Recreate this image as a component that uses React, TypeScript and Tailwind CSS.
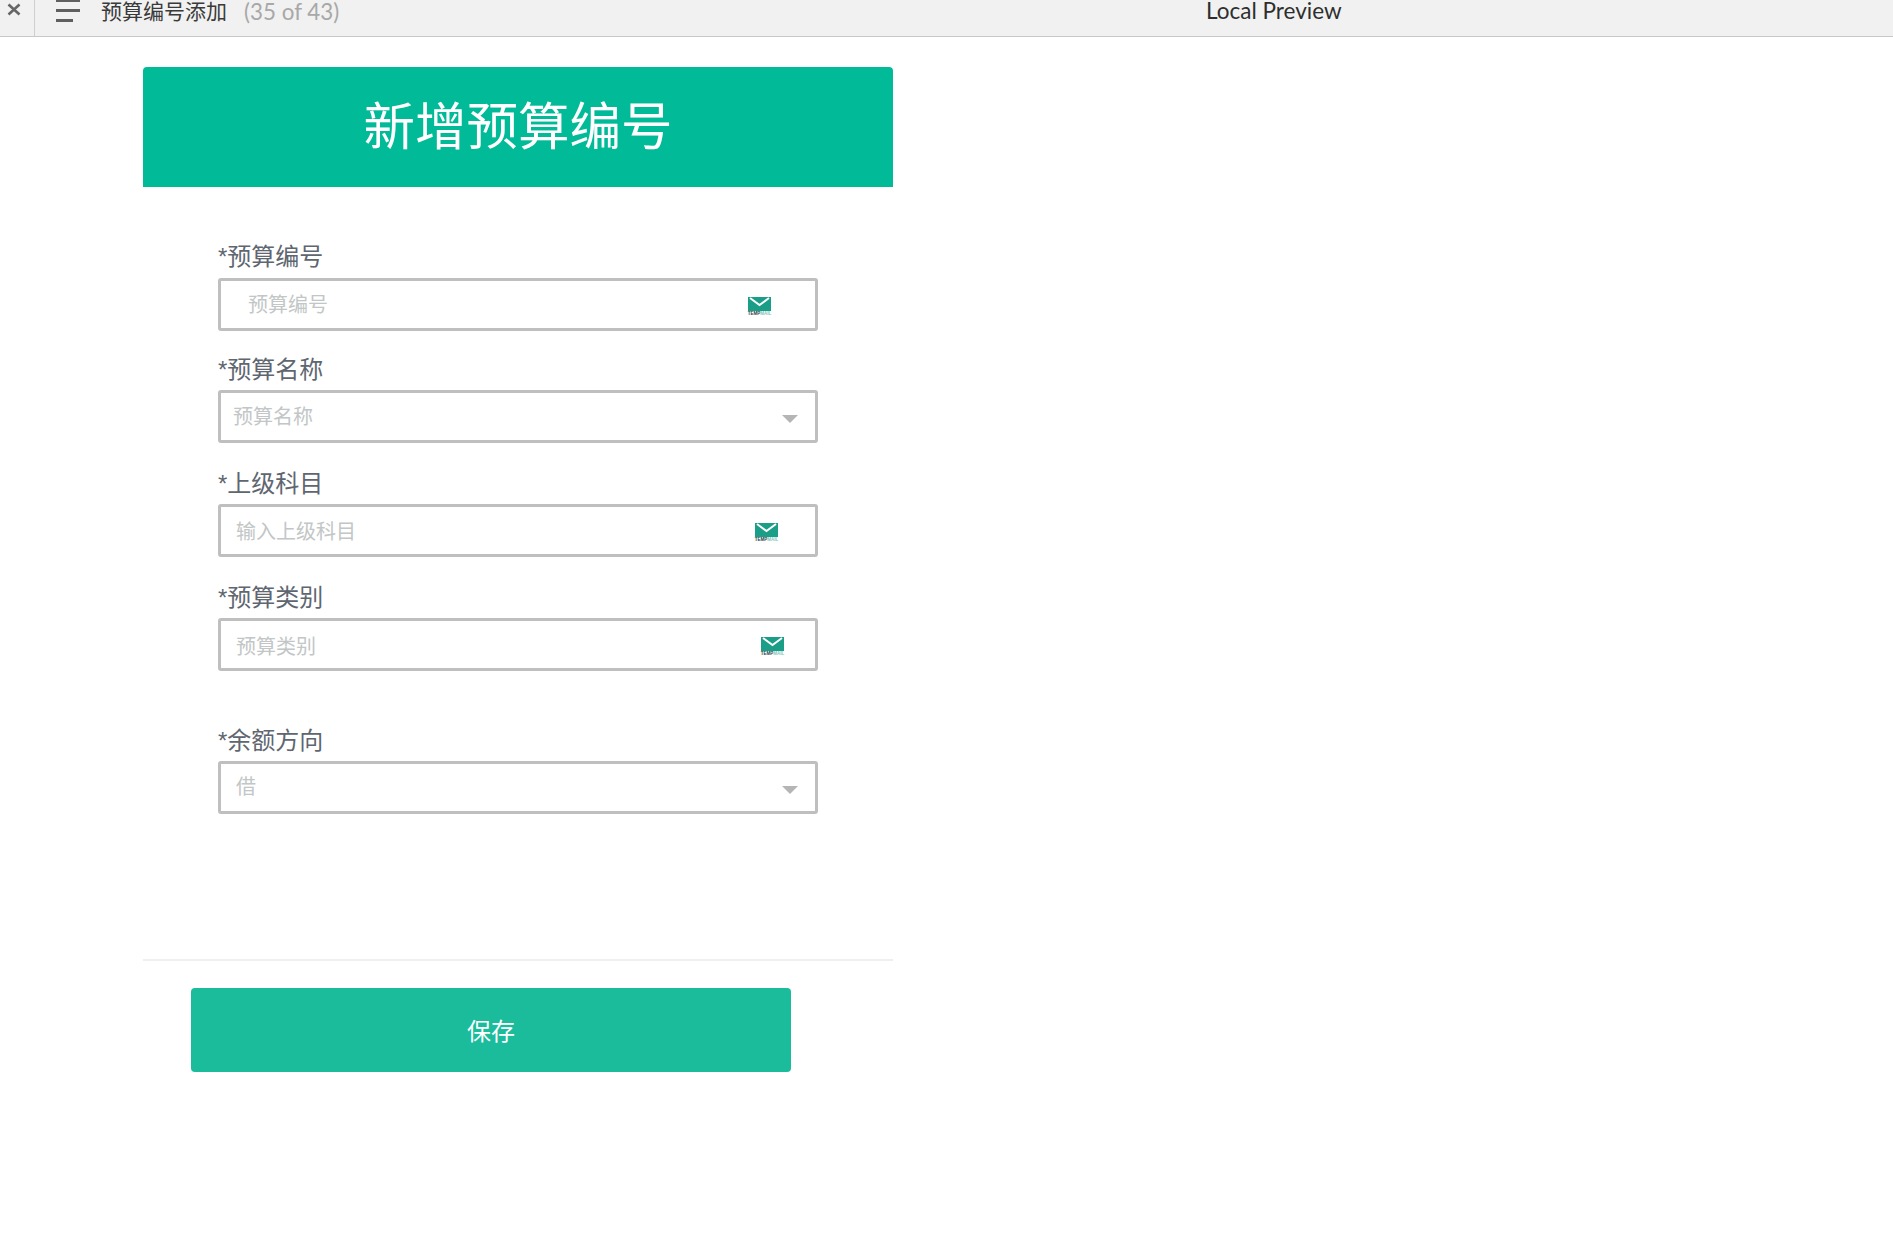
const font = "font-['Liberation_Sans','Noto_Sans_CJK_SC',sans-serif]";

function Mail() {
  return (
    <div className="flex flex-col items-center w-[23px] mt-[3px]">
      <svg width="23" height="14" viewBox="0 0 23 14">
        <rect width="23" height="14" fill="#1b9e87" />
        <path d="M2 1 L11.5 8 L21 1" fill="none" stroke="#ffffff" strokeWidth="2" />
      </svg>
      <span className="text-[4.5px] leading-[5px] font-bold text-[#23404a] font-['Liberation_Sans',sans-serif] whitespace-nowrap">
        TEMP<span className="text-[#7fc4b8]">MAIL</span>
      </span>
    </div>
  );
}

function Arrow() {
  return (
    <svg width="16" height="8" viewBox="0 0 16 8" className="absolute right-[17px] top-[22px]">
      <path d="M0 0 H16 L8 8 Z" fill="#b5b5b5" />
    </svg>
  );
}

function Field({
  label,
  placeholder,
  pad,
  mail,
  mt,
  textClass = "mt-[1px]",
  labelClass = "leading-[38px]",
}: {
  label: string;
  placeholder: string;
  pad: string;
  mail?: boolean;
  mt: string;
  textClass?: string;
  labelClass?: string;
}) {
  return (
    <div className={`${mt} w-[600px]`}>
      <div className={`h-[36px] text-[24px] text-[#5e6670] ${labelClass}`}>{label}</div>
      <div className={`relative h-[53px] mt-[3px] border-[3px] border-[#bfbfbf] rounded-[3px] flex items-center justify-between bg-white ${pad}`}>
        <span className={`text-[20px] text-[#c2c6c6] leading-none ${textClass}`}>{placeholder}</span>
        {mail ? <Mail /> : <Arrow />}
      </div>
    </div>
  );
}

export default function App() {
  return (
    <div className={`w-[1893px] h-[1245px] bg-white overflow-hidden ${font}`}>
      <div className="h-[37px] bg-[#f1f1f1] border-b border-[#c8c8c8] flex items-start text-[#3a3a3a]">
        <div className="w-[35px] h-full border-r border-[#cfcfcf] pl-[7px] pt-[3px]">
          <svg width="14" height="13" viewBox="0 0 14 13">
            <path d="M1.5 1.5 L12.5 11.5 M12.5 1.5 L1.5 11.5" stroke="#666" strokeWidth="2.6" />
          </svg>
        </div>
        <div className="ml-[21px] w-[24px] flex flex-col gap-[7px]">
          <div className="h-[2px] w-[24px] bg-[#5f5f5f]" />
          <div className="h-[3px] w-[24px] bg-[#5f5f5f]" />
          <div className="h-[3px] w-[17px] bg-[#5f5f5f]" />
        </div>
        <div className="ml-[21px] w-[1105px] flex items-center whitespace-nowrap">
          <span className="text-[21px] leading-[24px]">预算编号添加</span>
          <span className="ml-[17px] text-[22.4px] leading-[24px] text-[#a8a8a8] font-['Lato',sans-serif]">(35 of 43)</span>
        </div>
        <div className="text-[22.5px] leading-[22px] text-[#2e2e2e] font-['Lato',sans-serif] whitespace-nowrap">Local Preview</div>
      </div>

      <div className="ml-[143px] mt-[30px] w-[750px]">
        <div className="h-[120px] bg-[#00ba98] rounded-t-[4px] flex items-center justify-center text-white text-[51.5px] leading-none pt-[1px]">
          新增预算编号
        </div>

        <div className="pl-[75px] pt-[52px]">
          <Field mt="" label="*预算编号" placeholder="预算编号" pad="pl-[27px] pr-[44px]" mail labelClass="leading-[36px]" />
          <Field mt="mt-[20px]" label="*预算名称" placeholder="预算名称" pad="pl-[12px]" textClass="mt-0" />
          <Field mt="mt-[22px]" label="*上级科目" placeholder="输入上级科目" pad="pl-[15px] pr-[37px]" mail textClass="mt-[3px]" />
          <Field mt="mt-[22px]" label="*预算类别" placeholder="预算类别" pad="pl-[15px] pr-[31px]" mail textClass="mt-[4px]" />
          <Field mt="mt-[51px]" label="*余额方向" placeholder="借" pad="pl-[15px]" textClass="-mt-[1px]" />
        </div>

        <div className="mt-[145px] h-[2px] bg-[#efefef]" />

        <div className="ml-[48px] mt-[27px] w-[600px] h-[84px] bg-[#1abc9c] rounded-[4px] flex items-center justify-center text-white text-[24px] leading-none pt-[3px]">
          保存
        </div>
      </div>
    </div>
  );
}
